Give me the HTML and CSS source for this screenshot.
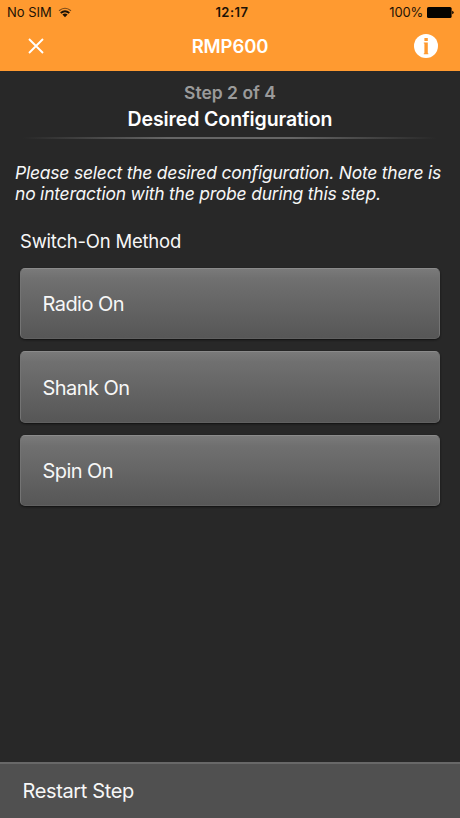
FILE: index.html
```
<!DOCTYPE html>
<html lang="en">
<head>
    <meta charset="UTF-8">
    <meta name="viewport" content="width=device-width, initial-scale=1.0">
    <title>RMP600</title>
    <link rel="stylesheet" href="styles.css">
</head>
<body>
    <div class="app">
        <header class="top">
            <div class="status-bar">
                <div class="carrier">
                    <span class="carrier-name">No SIM</span>
                    <svg class="wifi" width="14" height="11" viewBox="0 0 14 11" fill="none" stroke="#1c1206">
                        <path d="M1 3.7Q7 -1.2 13 3.7" stroke-width="1.1" opacity="0.6"/>
                        <path d="M2.7 6Q7 2.4 11.3 6" stroke-width="1.9"/>
                        <path d="M4.4 7.5Q7 5.5 9.6 7.5L7 10.3Z" fill="#1c1206" stroke="none"/>
                    </svg>
                </div>
                <span class="clock">12:17</span>
                <div class="battery">
                    <span class="battery-level">100%</span>
                    <svg width="27" height="11" viewBox="0 0 27 11" fill="#050300">
                        <rect x="0" y="0" width="24.6" height="11" rx="1.6"/>
                        <path d="M25.2 3.7Q26.7 4.2 26.7 5.5T25.2 7.3Z"/>
                    </svg>
                </div>
            </div>
            <nav class="nav-bar">
                <button class="icon-btn" aria-label="Close">
                    <svg width="16" height="16" viewBox="0 0 16 16" stroke="#fff" stroke-width="1.9">
                        <path d="M1 1L15 15M15 1L1 15"/>
                    </svg>
                </button>
                <h1 class="title">RMP600</h1>
                <button class="icon-btn" aria-label="Info">
                    <svg width="24" height="24" viewBox="0 0 24 24">
                        <circle cx="12" cy="12" r="12" fill="#fff"/>
                        <path d="M10.4 4H13.8V7H10.4ZM9.8 8.4H13.8V19.2H14.3V20.2H9.8V19.2H10.4V9.6H9.8Z" fill="#ff9a30"/>
                    </svg>
                </button>
            </nav>
        </header>

        <main class="content">
            <div class="step">
                <p class="step-count">Step 2 of 4</p>
                <h2 class="step-title">Desired Configuration</h2>
            </div>
            <p class="intro">
                <span>Please select the desired configuration. Note there is</span>
                <span>no interaction with the probe during this step.</span>
            </p>
            <h3 class="label">Switch-On Method</h3>
            <div class="options">
                <button class="option">Radio On</button>
                <button class="option">Shank On</button>
                <button class="option">Spin On</button>
            </div>
        </main>

        <button class="restart">Restart Step</button>
    </div>
</body>
</html>
```
FILE: styles.css
```
* {
    box-sizing: border-box;
}
body {
    margin: 0;
    font-family: Inter, 'Liberation Sans', Arial, sans-serif;
    background-color: #282828;
    color: #f7f7f7;
}
h1, h2, h3, p {
    margin: 0;
}
button {
    margin: 0;
    border: none;
    background: none;
    color: inherit;
    font-family: inherit;
    cursor: pointer;
}
.app {
    display: flex;
    flex-direction: column;
    height: 100vh;
    min-height: 600px;
}
.top {
    height: 71px;
    background-color: #ff9a30;
}
.status-bar {
    display: grid;
    grid-template-columns: 1fr auto 1fr;
    align-items: center;
    height: 24px;
    padding: 0 6px 0 7px;
    color: #1c1206;
    font-size: 13px;
}
.carrier, .battery {
    display: flex;
    align-items: center;
}
.carrier {
    gap: 6px;
}
.battery {
    justify-content: flex-end;
    gap: 4px;
}
.battery-level {
    letter-spacing: -0.2px;
}
.clock {
    padding-left: 3px;
    font-weight: 600;
    letter-spacing: 0.5px;
}
.nav-bar {
    display: flex;
    align-items: center;
    justify-content: space-between;
    height: 44px;
    padding: 0 22px 0 28px;
}
.icon-btn {
    display: flex;
    padding: 0;
}
.title {
    margin-left: 2px;
    color: #fff;
    font-size: 18.5px;
    font-weight: 600;
    letter-spacing: -0.1px;
}
.content {
    flex: 1;
}
.step {
    height: 68px;
    margin: 0 23px;
    padding-top: 10px;
    text-align: center;
    background: linear-gradient(to right, transparent, #666 35%, #666 65%, transparent) bottom / 100% 2px no-repeat;
}
.step-count {
    color: #9b9b9b;
    font-size: 17.5px;
    font-weight: 600;
    line-height: 23px;
}
.step-title {
    color: #fff;
    font-size: 19.5px;
    font-weight: 600;
    line-height: 30px;
    letter-spacing: -0.1px;
}
.intro {
    padding: 23px 0 0 15px;
    font-size: 17.5px;
    font-style: italic;
    line-height: 21px;
    letter-spacing: -0.22px;
    white-space: nowrap;
}
.intro span {
    display: block;
}
.label {
    padding: 25px 0 0 20px;
    font-size: 18.5px;
    font-weight: 400;
    line-height: 24px;
    letter-spacing: -0.22px;
}
.options {
    display: flex;
    flex-direction: column;
    gap: 12px;
    padding: 15px 20px 0;
}
.option {
    height: 71.4px;
    padding: 1px 0 0 21.5px;
    border: 1px solid #747474;
    border-top-color: #8b8b8b;
    border-bottom-color: #606060;
    border-radius: 5px;
    background: linear-gradient(#7b7b7b, #707070 15%, #565656) border-box;
    box-shadow: 0 1px 2px #111;
    font-size: 20px;
    letter-spacing: -0.55px;
    text-align: left;
}
.restart {
    height: 56px;
    padding: 0 0 1px 22.5px;
    border-top: 2px solid #686868;
    background-color: #505050;
    font-size: 20px;
    letter-spacing: -0.36px;
    text-align: left;
}
```
